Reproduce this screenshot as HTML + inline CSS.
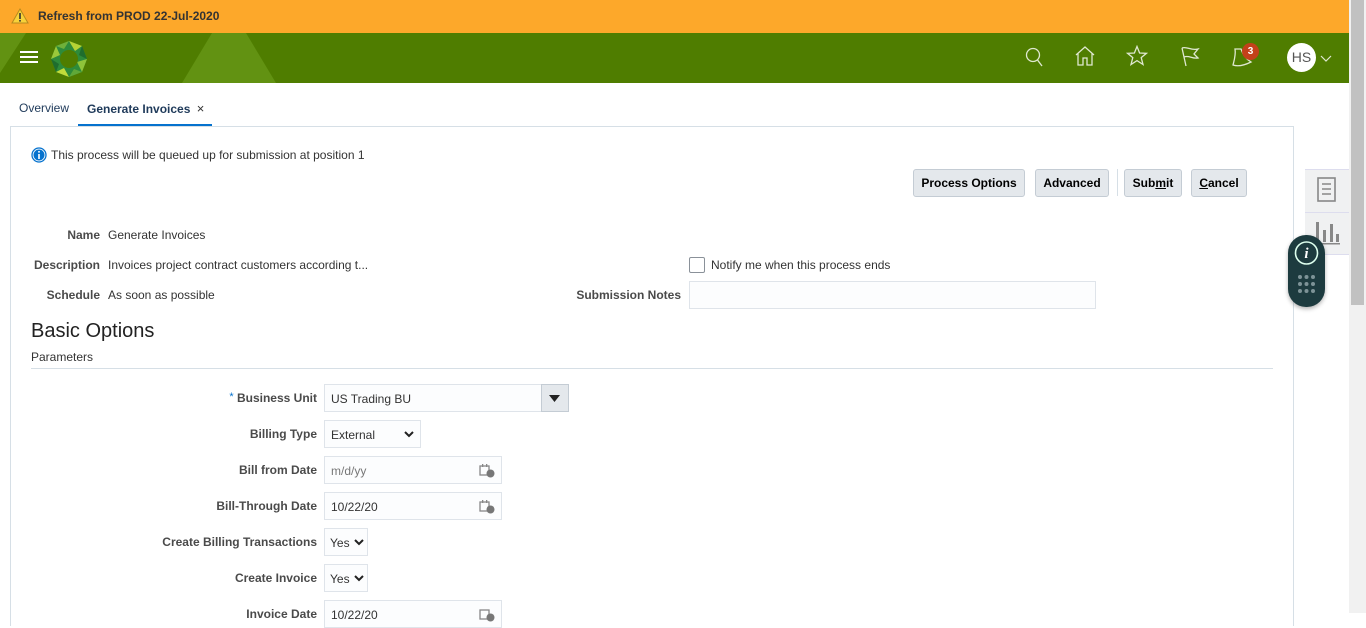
<!DOCTYPE html>
<html><head><style>
*{box-sizing:border-box;margin:0;padding:0}
body{width:1366px;height:613px;overflow:hidden;font-family:"Liberation Sans",Arial,sans-serif;font-size:12px;color:#333;background:#fff;position:relative}
.abs{position:absolute}
.lbl{position:absolute;text-align:right;font-weight:bold;color:#4a4a4a;font-size:12px;width:300px}
.inp{position:absolute;border:1px solid #dfe4ea;background:#fcfdfe;height:28px;font-size:12px;padding:7px 6px;color:#333}
.btn{position:absolute;top:169px;height:28px;border:1px solid #c4ccd4;border-radius:3px;background:#e4e8ec;font-weight:bold;font-size:12px;color:#000;text-align:center;line-height:26px}
.chev{position:absolute;right:6px;top:7px}
.cal{position:absolute;right:6px;top:6px}
</style></head><body>
<div class="abs" style="left:0;top:0;width:1349px;height:33px;background:#fda82a"></div>
<svg class="abs" style="left:11px;top:8px" width="18" height="16"><path d="M9 1 L17 15 L1 15 Z" fill="#f8d23a" stroke="#b78a1d" stroke-width="1"/><rect x="8.2" y="5" width="1.6" height="6" fill="#333"/><rect x="8.2" y="12" width="1.6" height="1.6" fill="#333"/></svg>
<div class="abs" style="left:38px;top:9px;font-weight:bold;font-size:12px;color:#333">Refresh from PROD 22-Jul-2020</div>
<div class="abs" style="left:0;top:33px;width:1349px;height:50px;background:#4f7d00;overflow:hidden">
<svg width="1349" height="50" style="position:absolute;left:0;top:0"><path d="M0 0 L26 0 L0 40 Z" fill="#629212"/><path d="M182 50 L212 0 L246 0 L276 50 Z" fill="#629212"/></svg>
</div>
<div class="abs" style="left:20px;top:51px;width:18px;height:2px;background:#fff;box-shadow:0 5px 0 #fff,0 10px 0 #fff"></div>
<svg class="abs" style="left:50px;top:40px" width="38" height="38" viewBox="0 0 38 38"><polygon points="19,1 32,6 37,19 32,32 19,37 6,32 1,19 6,6" fill="#2e8b3a"/><polygon points="19,1 32,6 25,11" fill="#b6d334"/><polygon points="37,19 32,32 27,22" fill="#8fc43a"/><polygon points="19,37 6,32 14,28" fill="#c2dc3a"/><polygon points="1,19 6,6 10,15" fill="#9ac93a"/><polygon points="6,6 19,1 14,9" fill="#6fb03a"/><polygon points="32,6 37,19 29,15" fill="#1f6d2e"/><polygon points="32,32 19,37 24,29" fill="#60a838"/><polygon points="6,32 1,19 9,24" fill="#1f6d2e"/><circle cx="19" cy="19" r="9" fill="#4f7d00"/></svg>
<svg class="abs" style="left:1024px;top:46px" width="22" height="22" fill="none" stroke="#dfe8d0" stroke-width="1.3"><circle cx="9" cy="9" r="6.5"/><path d="M13.5 14 L18 20"/></svg>
<svg class="abs" style="left:1074px;top:45px" width="22" height="22" fill="none" stroke="#dfe8d0" stroke-width="1.3"><path d="M2 10 L11 2 L20 10 M4 8 V20 H9 V13 H13 V20 H18 V8"/></svg>
<svg class="abs" style="left:1126px;top:45px" width="22" height="22" fill="none" stroke="#dfe8d0" stroke-width="1.3"><path d="M11 1.5 L13.6 8 L20.5 8.3 L15.2 12.6 L17 19.5 L11 15.6 L5 19.5 L6.8 12.6 L1.5 8.3 L8.4 8 Z"/></svg>
<svg class="abs" style="left:1179px;top:45px" width="22" height="22" fill="none" stroke="#dfe8d0" stroke-width="1.3"><path d="M3 3 L7 21 M3 3 C8 1 12 6 19 4 L15 9 L19 13 C13 14 10 10 5 12"/></svg>
<svg class="abs" style="left:1231px;top:45px" width="22" height="24" fill="none" stroke="#dfe8d0" stroke-width="1.3"><path d="M4 4 C5 10 3 16 2 20 C8 22 14 20 20 17 C15 14 12 10 10 4 Z"/></svg>
<div class="abs" style="left:1242px;top:43px;width:17px;height:17px;border-radius:50%;background:#c3411a;color:#fff;font-size:10px;font-weight:bold;text-align:center;line-height:17px">3</div>
<div class="abs" style="left:1287px;top:43px;width:29px;height:29px;border-radius:50%;background:#fff;color:#555;font-size:14px;text-align:center;line-height:29px">HS</div>
<svg class="abs" style="left:1320px;top:55px" width="12" height="8" fill="none" stroke="#dfe8d0" stroke-width="1.2"><path d="M1 1 L6 6 L11 1"/></svg>
<div class="abs" style="left:1349px;top:0;width:17px;height:613px;background:#f1f1f1"></div>
<div class="abs" style="left:1351px;top:0;width:13px;height:305px;background:#c1c1c1"></div>
<div class="abs" style="left:19px;top:101px;color:#1f3a5a;font-size:12px">Overview</div>
<div class="abs" style="left:87px;top:101px;color:#1f3a5a;font-size:12px;font-weight:bold">Generate Invoices <span style="font-weight:normal;font-size:13px;margin-left:3px;color:#333">×</span></div>
<div class="abs" style="left:78px;top:124px;width:134px;height:3px;background:#0572ce"></div>
<div class="abs" style="left:10px;top:126px;width:1284px;height:500px;border:1px solid #d6dfe6;border-bottom:none"></div>
<svg class="abs" style="left:31px;top:147px" width="16" height="16"><circle cx="8" cy="8" r="7" fill="#fff" stroke="#0572ce" stroke-width="1.3"/><circle cx="8" cy="8" r="5.5" fill="#0572ce"/><rect x="7.2" y="7" width="1.6" height="5" fill="#fff"/><rect x="7.2" y="4" width="1.6" height="1.6" fill="#fff"/></svg>
<div class="abs" style="left:51px;top:148px">This process will be queued up for submission at position 1</div>
<div class="btn" style="left:913px;width:112px">Process Options</div>
<div class="btn" style="left:1035px;width:74px">Advanced</div>
<div class="abs" style="left:1117px;top:169px;width:1px;height:27px;background:#d6dfe6"></div>
<div class="btn" style="left:1124px;width:58px">Sub<u>m</u>it</div>
<div class="btn" style="left:1191px;width:56px"><u>C</u>ancel</div>
<div class="abs" style="left:1305px;top:169px;width:44px;height:86px;background:#f0f1f2;border-top:1px solid #dde;border-bottom:1px solid #dde"></div>
<div class="abs" style="left:1305px;top:212px;width:44px;height:1px;background:#dde"></div>
<svg class="abs" style="left:1317px;top:177px" width="20" height="26" fill="none" stroke="#888" stroke-width="1.6"><rect x="1" y="1" width="17" height="23"/><path d="M5 7 H14 M5 12 H14 M5 17 H14"/></svg>
<svg class="abs" style="left:1314px;top:220px" width="28" height="26" fill="#888"><rect x="2" y="2" width="3" height="20"/><rect x="9" y="10" width="3" height="12"/><rect x="16" y="4" width="3" height="18"/><rect x="22" y="14" width="3" height="8"/><rect x="2" y="23" width="24" height="1.5"/></svg>
<div class="abs" style="left:1288px;top:235px;width:37px;height:72px;border-radius:18px;background:#1d3b3f;box-shadow:0 2px 4px rgba(0,0,0,.3)"></div>
<svg class="abs" style="left:1292px;top:239px" width="29" height="62"><circle cx="14.5" cy="14" r="11" fill="none" stroke="#dfe" stroke-width="1.6"/><text x="14.5" y="19" text-anchor="middle" fill="#fff" font-family="Liberation Serif" font-style="italic" font-weight="bold" font-size="15">i</text><g fill="#7d9397"><circle cx="8" cy="38" r="2"/><circle cx="14.5" cy="38" r="2"/><circle cx="21" cy="38" r="2"/><circle cx="8" cy="45" r="2"/><circle cx="14.5" cy="45" r="2"/><circle cx="21" cy="45" r="2"/><circle cx="8" cy="52" r="2"/><circle cx="14.5" cy="52" r="2"/><circle cx="21" cy="52" r="2"/></g></svg>
<div class="lbl" style="left:-200px;top:228px">Name</div><div class="abs" style="left:108px;top:228px">Generate Invoices</div>
<div class="lbl" style="left:-200px;top:258px">Description</div><div class="abs" style="left:108px;top:258px">Invoices project contract customers according t...</div>
<div class="lbl" style="left:-200px;top:288px">Schedule</div><div class="abs" style="left:108px;top:288px">As soon as possible</div>
<div class="abs" style="left:689px;top:257px;width:16px;height:16px;border:1px solid #8a9199;border-radius:2px;background:#fff"></div>
<div class="abs" style="left:711px;top:258px">Notify me when this process ends</div>
<div class="lbl" style="left:381px;top:288px">Submission Notes</div>
<div class="inp" style="left:689px;top:281px;width:407px"></div>
<div class="abs" style="left:31px;top:320px;font-size:20px;color:#222">Basic Options</div>
<div class="abs" style="left:31px;top:350px;font-size:12px">Parameters</div>
<div class="abs" style="left:31px;top:368px;width:1242px;height:1px;background:#d6dfe6"></div>
<div class="lbl" style="left:17px;top:391px"><span style="color:#0572ce;font-weight:normal;vertical-align:top;font-size:11px">*</span> Business Unit</div>
<div class="inp" style="left:324px;top:384px;width:245px">US Trading BU</div>
<div class="abs" style="left:541px;top:384px;width:28px;height:28px;background:#e4e8ec;border:1px solid #c4ccd4"></div>
<svg class="abs" style="left:549px;top:395px" width="11" height="7"><path d="M0 0 H11 L5.5 7 Z" fill="#222"/></svg>
<div class="lbl" style="left:17px;top:427px">Billing Type</div>
<div class="inp" style="left:324px;top:420px;width:97px">External<svg class="chev" width="10" height="12" fill="none" stroke="#222" stroke-width="2"><path d="M1 4 L5 8 L9 4"/></svg></div>
<div class="lbl" style="left:17px;top:463px">Bill from Date</div>
<div class="inp" style="left:324px;top:456px;width:178px;color:#777">m/d/yy<svg class="cal" width="16" height="15"><rect x="1" y="3" width="9" height="9" fill="none" stroke="#888" stroke-width="1.3"/><rect x="3" y="1" width="1.3" height="3" fill="#888"/><rect x="7" y="1" width="1.3" height="3" fill="#888"/><circle cx="11.5" cy="10.5" r="4" fill="#777"/></svg></div>
<div class="lbl" style="left:17px;top:499px">Bill-Through Date</div>
<div class="inp" style="left:324px;top:492px;width:178px">10/22/20<svg class="cal" width="16" height="15"><rect x="1" y="3" width="9" height="9" fill="none" stroke="#888" stroke-width="1.3"/><rect x="3" y="1" width="1.3" height="3" fill="#888"/><rect x="7" y="1" width="1.3" height="3" fill="#888"/><circle cx="11.5" cy="10.5" r="4" fill="#777"/></svg></div>
<div class="lbl" style="left:17px;top:535px">Create Billing Transactions</div>
<div class="inp" style="left:324px;top:528px;width:44px;padding-left:5px">Yes<svg class="chev" width="10" height="12" style="right:3px" fill="none" stroke="#222" stroke-width="2"><path d="M1 4 L5 8 L9 4"/></svg></div>
<div class="lbl" style="left:17px;top:571px">Create Invoice</div>
<div class="inp" style="left:324px;top:564px;width:44px;padding-left:5px">Yes<svg class="chev" width="10" height="12" style="right:3px" fill="none" stroke="#222" stroke-width="2"><path d="M1 4 L5 8 L9 4"/></svg></div>
<div class="lbl" style="left:17px;top:607px">Invoice Date</div>
<div class="inp" style="left:324px;top:600px;width:178px">10/22/20<svg class="cal" width="16" height="15"><rect x="1" y="3" width="9" height="9" fill="none" stroke="#888" stroke-width="1.3"/><circle cx="11.5" cy="10.5" r="4" fill="#777"/></svg></div>
</body></html>
